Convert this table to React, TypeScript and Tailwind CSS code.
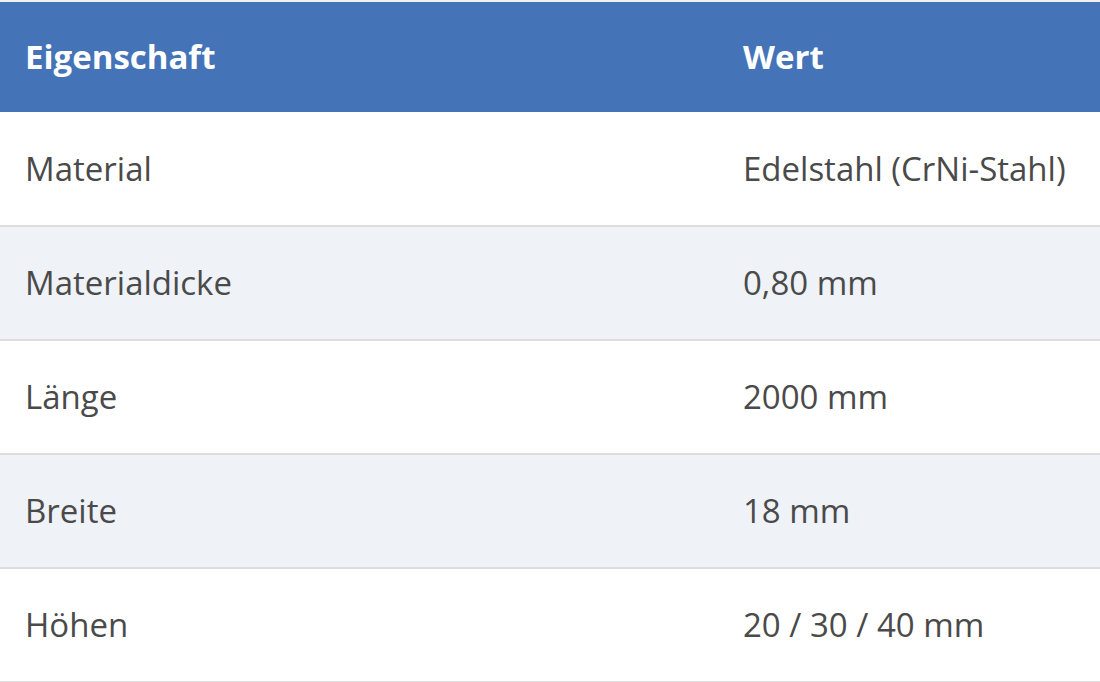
const rows = [
  { prop: 'Material', value: 'Edelstahl (CrNi-Stahl)' },
  { prop: 'Materialdicke', value: '0,80 mm' },
  { prop: 'Länge', value: '2000 mm' },
  { prop: 'Breite', value: '18 mm' },
  { prop: 'Höhen', value: '20 / 30 / 40 mm' },
];

export default function App() {
  return (
    <div className="w-[1100px] h-[682px] overflow-hidden pt-[2px] bg-[#f0f0f0]">
      <table
        className="w-full border-collapse table-fixed bg-white text-[33px] text-[#4a4a4a]"
        style={{ fontFamily: '"Open Sans", "Noto Sans", sans-serif' }}
      >
        <colgroup>
          <col className="w-[718px]" />
          <col />
        </colgroup>
        <thead>
          <tr className="bg-[#4474b7] text-white h-[110px]">
            <th className="text-left font-bold px-[25px]">Eigenschaft</th>
            <th className="text-left font-bold px-[25px]">Wert</th>
          </tr>
        </thead>
        <tbody>
          {rows.map((r, i) => (
            <tr
              key={r.prop}
              className={`h-[114px] border-b-2 border-[#dddddd] ${i % 2 === 1 ? 'bg-[#eff2f7]' : 'bg-white'}`}
            >
              <td className="px-[25px] whitespace-nowrap">{r.prop}</td>
              <td className="px-[25px] whitespace-nowrap">{r.value}</td>
            </tr>
          ))}
        </tbody>
      </table>
    </div>
  );
}
